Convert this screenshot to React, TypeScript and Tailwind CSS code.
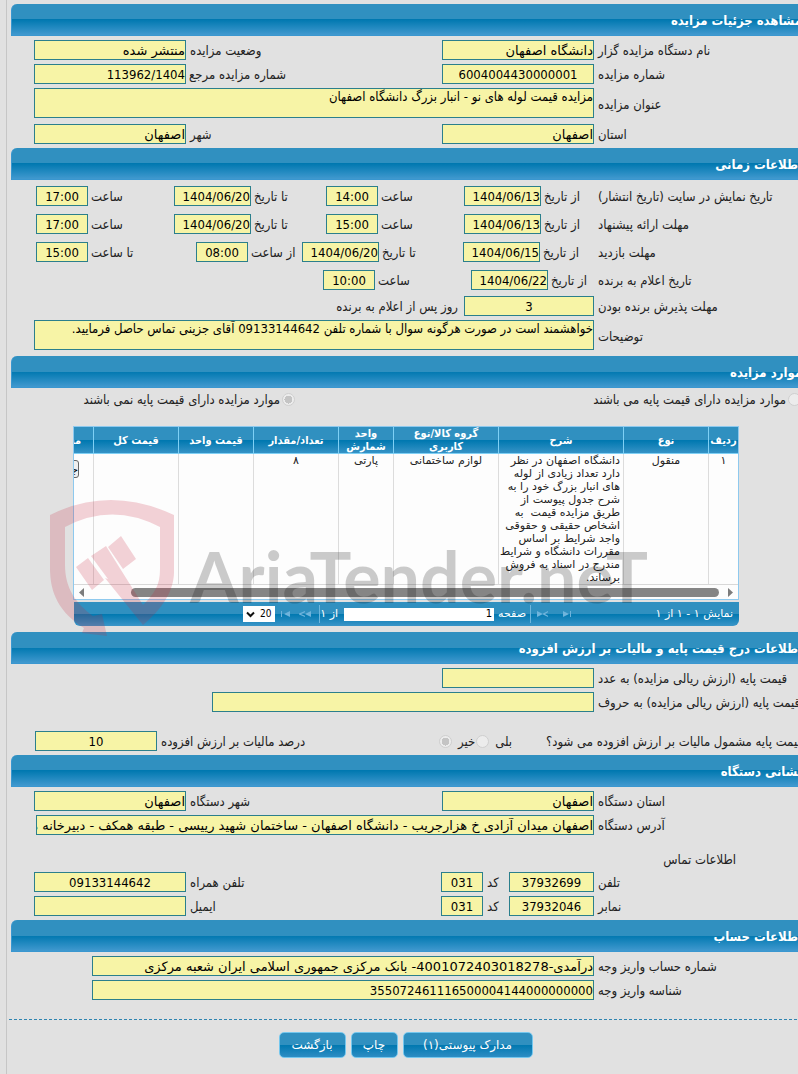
import React, { useId } from "react";
import clsx from "clsx";

const fieldClass =
  "block shrink-0 border border-[#2b7f8c] bg-[#f7f4a6] p-0 text-black outline-none";

const wideFont = "font-['DejaVu_Sans',sans-serif]";

type SectionProps = {
  title: string;
  className?: string;
  children: React.ReactNode;
};

function Section({ title, className, children }: SectionProps) {
  return (
    <section className={clsx("relative", className)}>
      <div className="flex h-8 items-center rounded-tl-md border-b border-l border-[#3a97d0] bg-[linear-gradient(#3090c0_0,#3090c0_50%,#0078b0_50%,#4199cf_100%)]">
        <h2 className="-mr-1 whitespace-nowrap pt-0.5 text-[13px] font-bold text-white">
          {title}
        </h2>
      </div>
      {children}
    </section>
  );
}

type RowProps = { className?: string; children: React.ReactNode };

function Row({ className, children }: RowProps) {
  return (
    <div className={clsx("flex items-center", className ?? "h-6 pl-[23px]")}>
      {children}
    </div>
  );
}

type FieldProps = {
  label: string;
  value?: string;
  labelWidth: string;
  width: string;
  align?: string;
  ltr?: boolean;
  wide?: boolean;
};

// label cell followed by its read only box, label text sits against the box
function Field({
  label,
  value = "",
  labelWidth,
  width,
  align,
  ltr,
  wide,
}: FieldProps) {
  const id = useId();
  return (
    <>
      <label
        htmlFor={id}
        className={clsx(
          "flex justify-end whitespace-nowrap pt-0.5",
          labelWidth,
          ltr ? "pl-[3px]" : "pl-1",
        )}
      >
        {label}
      </label>
      <input
        id={id}
        readOnly
        defaultValue={value}
        dir={ltr ? "ltr" : "rtl"}
        className={clsx(
          fieldClass,
          "h-5 text-[13px]",
          width,
          align,
          wide && wideFont,
        )}
      />
    </>
  );
}

function AreaField({ label, value }: { label: string; value: string }) {
  const id = useId();
  return (
    <Row className="h-9 pb-0.5 pl-[23px]">
      <label
        htmlFor={id}
        className="flex w-[204px] shrink-0 justify-end whitespace-nowrap pl-1 pt-1"
      >
        {label}
      </label>
      <textarea
        id={id}
        readOnly
        defaultValue={value}
        className={clsx(
          fieldClass,
          "h-[30px] min-w-0 flex-1 resize-none overflow-hidden text-[13px] leading-4",
        )}
      />
    </Row>
  );
}

type Slot = { label: string; value: string; cell: string; date?: boolean };

function DateRow({ title, slots }: { title: string; slots: Slot[] }) {
  return (
    <Row className="h-7 pl-[25px]">
      <div className="flex w-[204px] shrink-0 justify-end whitespace-nowrap pl-1 pt-0.5">
        {title}
      </div>
      {slots.map((s, i) => (
        <div key={i} className={clsx("flex items-center", s.cell)}>
          <Field
            label={s.label}
            value={s.value}
            labelWidth="flex-1"
            width={s.date ? "w-[77px]" : "w-[52px]"}
            align={s.date ? "text-right" : "text-center"}
            ltr
          />
        </div>
      ))}
    </Row>
  );
}

type RadioProps = { name: string; label: string; checked?: boolean };

function Radio({ name, label, checked }: RadioProps) {
  return (
    <label className="flex items-center whitespace-nowrap">
      <input
        type="radio"
        name={name}
        defaultChecked={checked}
        disabled
        className="size-[13px] shrink-0 appearance-none rounded-full border border-[#cfcfcf] bg-[#ececec] checked:bg-[radial-gradient(circle,#c4c4c4_0,#c4c4c4_4px,#ececec_4px)]"
      />
      <span className="pr-0.5 pt-0.5">{label}</span>
    </label>
  );
}

const columns = [
  { title: "ردیف", width: "w-[30px]" },
  { title: "نوع", width: "w-[85px]" },
  { title: "شرح", width: "w-[125px]" },
  { title: "گروه کالا/نوع\nکاربری", width: "w-[105px]" },
  { title: "واحد\nشمارش", width: "w-[55px]" },
  { title: "تعداد/مقدار", width: "w-[85px]" },
  { title: "قیمت واحد", width: "w-[75px]" },
  { title: "قیمت کل", width: "w-[85px]" },
  { title: "مستندات", width: "w-[68px]" },
];

const descriptionLines = [
  "دانشگاه اصفهان در نظر",
  "دارد تعداد زیادی از لوله",
  "های انبار بزرگ خود را به",
  "شرح جدول پیوست از",
  "طریق مزایده قیمت  به",
  "اشخاص حقیقی و حقوقی",
  "واجد شرایط بر اساس",
  "مقررات دانشگاه و شرایط",
  "مندرج در اسناد به فروش",
  "برساند.",
];

function ItemsTable() {
  const cell = "border-l border-[#dcdcdc] p-0 text-center";
  return (
    <div className="overflow-hidden border border-[#8ec9ee] bg-[#fdfdfd]">
      <table className="w-[713px] table-fixed border-separate border-spacing-0 text-[11px]">
        <thead>
          <tr className="h-[27px] bg-[linear-gradient(#3090c0_0,#3090c0_50%,#0078b0_50%,#3a95c8_100%)] text-white">
            {columns.map((c) => (
              <th
                key={c.title}
                className={clsx(
                  "whitespace-pre border-b border-l border-[#7fd0f5] p-0 text-center leading-[13px]",
                  c.width,
                )}
              >
                {c.title}
              </th>
            ))}
          </tr>
        </thead>
        <tbody>
          <tr
            className={clsx(
              "h-[130px] align-top leading-[13px] text-[#222]",
              wideFont,
            )}
          >
            <td className={cell}>۱</td>
            <td className={cell}>منقول</td>
            <td className={clsx(cell, "whitespace-pre pr-[3px] text-right")}>
              {descriptionLines.join("\n")}
            </td>
            <td className={cell}>لوازم ساختمانی</td>
            <td className={cell}>پارتی</td>
            <td className={cell}>۸</td>
            <td className={cell}></td>
            <td className={cell}></td>
            <td className="p-0 pr-3.5 pt-1.5 text-right">
              <button className="h-[18px] rounded-[3px] border border-[#666] bg-[#efefef] pl-1 text-black">
                جزئیات
              </button>
            </td>
          </tr>
        </tbody>
      </table>
      <div
        dir="ltr"
        className="flex h-[15px] items-center border-t border-[#d8d8d8] px-1"
      >
        <svg width="7" height="9" viewBox="0 0 7 9" fill="#7c7c7c">
          <path d="M6 0v9L1 4.500z" />
        </svg>
        <div className="ml-[46px] mr-2 h-[9px] flex-1 rounded-full bg-[#858585]" />
        <svg width="7" height="9" viewBox="0 0 7 9" fill="#7c7c7c">
          <path d="M1 0v9l5-4.500z" />
        </svg>
      </div>
    </div>
  );
}

function PagerIcon({ label, d }: { label: string; d: string }) {
  return (
    <button aria-label={label} className="flex items-center">
      <svg width="12" height="8" viewBox="0 0 12 8">
        <path d={d} fill="#6fb4dc" />
      </svg>
    </button>
  );
}

function Pager() {
  return (
    <div
      className={clsx(
        "ml-px mt-0.5 flex h-6 items-center rounded-b-md bg-[linear-gradient(#3090c0_0,#3090c0_50%,#0078b0_50%,#3a95c8_100%)] pr-1.5 text-[11px] text-white",
        wideFont,
      )}
    >
      <div className="w-40">نمایش ۱ - ۱ از ۱</div>
      <div className="flex gap-3">
        <PagerIcon label="صفحه اول" d="M2 1v6l6-3zM9 1h1v6h-1z" />
        <PagerIcon
          label="صفحه قبل"
          d="M0 1v6l6-3zM11 1v1.200L8 4l3 1.800V7L6 4.400v-.8z"
        />
      </div>
      <div className="mr-1.5 h-[18px] w-px bg-[#6db6dd]" />
      <label htmlFor="page" className="px-1">
        صفحه
      </label>
      <input
        id="page"
        defaultValue="1"
        className="h-[13px] w-[150px] bg-white px-0.5 text-[10px] text-black outline-none"
      />
      <span className="w-6 whitespace-nowrap pr-1.5">از ۱</span>
      <div className="h-[18px] w-px bg-[#6db6dd]" />
      <div className="mr-2 flex gap-2">
        <PagerIcon
          label="صفحه بعد"
          d="M12 1v6L6 4zM6 1v1.200L2 4l4 1.800V7L0 4.400v-.8z"
        />
        <PagerIcon label="صفحه آخر" d="M11 1v6L5 4zM2 1h1v6H2z" />
      </div>
      <div className="relative mr-1">
        <select
          aria-label="تعداد در صفحه"
          dir="ltr"
          className="block h-4 w-8 appearance-none bg-white pl-[17px] font-['DejaVu_Sans_Condensed',sans-serif] text-[10px] text-black outline-none"
        >
          <option>20</option>
        </select>
        <svg
          className="pointer-events-none absolute left-[3px] top-[5px]"
          width="9"
          height="7"
          viewBox="0 0 9 7"
          fill="none"
          stroke="#111"
          strokeWidth="2"
        >
          <path d="M1 1.500 4.500 5 8 1.500" />
        </svg>
      </div>
    </div>
  );
}

function Watermark() {
  return (
    <div
      dir="ltr"
      aria-hidden
      className="pointer-events-none absolute left-[39px] top-[143px] z-10 flex"
    >
      <svg width="124" height="138" viewBox="0 0 124 138" fill="#c8233b" fillOpacity="0.2">
        <path d="M0 16Q60-14 124 16V73C124 92 112 110 93 126L55 79 58 80 41 57 56 47 71 71 93 106C105 94 110 86 110 70V28Q62 3 15 28V66C15 88 25 104 43 117L52 115 57 137 32 134 34 129C10 114 0 95 0 69Z" />
        <path d="M58 48 71 37 86 60 73 70ZM26 68 38 59 54 81 42 91Z" />
      </svg>
      <span className="ml-4 mt-[32px] whitespace-nowrap font-['Lato',sans-serif] text-[70px] font-bold leading-[90px] text-black/20">
        AriaTender.neT
      </span>
    </div>
  );
}

const buttonClass =
  "h-[26px] rounded-[5px] border border-[#74c7ee] bg-[linear-gradient(#3090c0_0,#3090c0_50%,#0078b0_50%,#2d8dc4_100%)] font-['DejaVu_Sans',sans-serif] text-[12px] text-white";

const firstLabel = "w-[204px] shrink-0";
const twoColumn = { labelWidth: firstLabel, width: "w-[152px]" };
const secondColumn = { labelWidth: "flex-1", width: "w-[152px]" };

export default function App() {
  return (
    <div
      dir="rtl"
      className="overflow-hidden bg-[#e1e1e1] pl-1.5 font-['DejaVu_Sans_Condensed','DejaVu_Sans',sans-serif] text-[13px] leading-4 text-[#222]"
    >
      <main className="border-l border-[#c6c6c6] pb-[18px] pt-1">
        <div className="pl-1">
          <Section title="مشاهده جزئیات مزایده">
            <div className="py-0.5">
              <Row>
                <Field label="نام دستگاه مزایده گزار" value="دانشگاه اصفهان" wide {...twoColumn} />
                <Field label="وضعیت مزایده" value="منتشر شده" wide {...secondColumn} />
              </Row>
              <Row>
                <Field label="شماره مزایده" value="6004004430000001" align="text-center" {...twoColumn} />
                <Field label="شماره مزایده مرجع" value="113962/1404" ltr align="text-right" {...secondColumn} />
              </Row>
              <AreaField
                label="عنوان مزایده"
                value="مزایده قیمت لوله های نو - انبار بزرگ دانشگاه اصفهان"
              />
              <Row>
                <Field label="استان" value="اصفهان" wide {...twoColumn} />
                <Field label="شهر" value="اصفهان" wide {...secondColumn} />
              </Row>
            </div>
          </Section>

          <Section title="اطلاعات زمانی">
            <div className="py-0.5">
              <DateRow
                title="تاریخ نمایش در سایت (تاریخ انتشار)"
                slots={[
                  { label: "از تاریخ", value: "1404/06/13", date: true, cell: "w-[130px]" },
                  { label: "ساعت", value: "14:00", cell: "w-[138px]" },
                  { label: "تا تاریخ", value: "1404/06/20", date: true, cell: "w-[152px]" },
                  { label: "ساعت", value: "17:00", cell: "flex-1" },
                ]}
              />
              <DateRow
                title="مهلت ارائه پیشنهاد"
                slots={[
                  { label: "از تاریخ", value: "1404/06/13", date: true, cell: "w-[130px]" },
                  { label: "ساعت", value: "15:00", cell: "w-[138px]" },
                  { label: "تا تاریخ", value: "1404/06/20", date: true, cell: "w-[152px]" },
                  { label: "ساعت", value: "17:00", cell: "flex-1" },
                ]}
              />
              <DateRow
                title="مهلت بازدید"
                slots={[
                  { label: "از تاریخ", value: "1404/06/15", date: true, cell: "w-[131px]" },
                  { label: "تا تاریخ", value: "1404/06/20", date: true, cell: "w-[161px]" },
                  { label: "از ساعت", value: "08:00", cell: "w-[106px]" },
                  { label: "تا ساعت", value: "15:00", cell: "flex-1" },
                ]}
              />
              <DateRow
                title="تاریخ اعلام به برنده"
                slots={[
                  { label: "از تاریخ", value: "1404/06/22", date: true, cell: "w-[123px]" },
                  { label: "ساعت", value: "10:00", cell: "w-[148px]" },
                ]}
              />
              <Row>
                <Field
                  label="مهلت پذیرش برنده بودن"
                  value="3"
                  labelWidth={firstLabel}
                  width="w-[130px]"
                  align="text-center"
                />
                <span className="pr-1.5 pt-0.5">روز پس از اعلام به برنده</span>
              </Row>
              <AreaField
                label="توضیحات"
                value="خواهشمند است در صورت هرگونه سوال با شماره تلفن 09133144642 آقای جزینی تماس حاصل فرمایید."
              />
            </div>
          </Section>

          <Section title="موارد مزایده">
            <div className="flex h-[22px] items-center">
              <div className="-mr-[3px] w-[506px]">
                <Radio name="basePrice" label="موارد مزایده دارای قیمت پایه می باشند" />
              </div>
              <Radio name="basePrice" label="موارد مزایده دارای قیمت پایه نمی باشند" checked />
            </div>
            <div className="mb-1.5 ml-[62px] mr-[59px] mt-4">
              <ItemsTable />
              <Pager />
            </div>
            <Watermark />
          </Section>

          <Section title="اطلاعات درج قیمت پایه و مالیات بر ارزش افزوده">
            <div className="py-0.5">
              <Row>
                <Field label="قیمت پایه (ارزش ریالی مزایده) به عدد" {...twoColumn} />
              </Row>
              <Row>
                <Field
                  label="قیمت پایه (ارزش ریالی مزایده) به حروف"
                  labelWidth={firstLabel}
                  width="w-[382px]"
                />
              </Row>
              <Row className="mt-[15px] h-6 pl-6">
                <div className="flex w-[252px] shrink-0 justify-end whitespace-nowrap pt-0.5">
                  قیمت پایه مشمول مالیات بر ارزش افزوده می شود؟
                </div>
                <div className="flex w-[107px] shrink-0 items-center justify-end">
                  <label htmlFor="vat-yes" className="pl-1.5 pt-0.5">
                    بلی
                  </label>
                  <input
                    id="vat-yes"
                    type="radio"
                    name="vat"
                    disabled
                    className="size-[13px] appearance-none rounded-full border border-[#cfcfcf] bg-[#ececec]"
                  />
                  <label htmlFor="vat-no" className="pl-1.5 pr-px pt-0.5">
                    خیر
                  </label>
                  <input
                    id="vat-no"
                    type="radio"
                    name="vat"
                    defaultChecked
                    disabled
                    className="size-[13px] appearance-none rounded-full border border-[#cfcfcf] bg-[radial-gradient(circle,#c4c4c4_0,#c4c4c4_4px,#ececec_4px)]"
                  />
                </div>
                <Field
                  label="درصد مالیات بر ارزش افزوده"
                  value="10"
                  labelWidth="flex-1"
                  width="w-[122px]"
                  align="text-center"
                />
              </Row>
            </div>
          </Section>

          <Section title="نشانی دستگاه">
            <div className="py-0.5">
              <Row>
                <Field label="استان دستگاه" value="اصفهان" wide {...twoColumn} />
                <Field label="شهر دستگاه" value="اصفهان" wide {...secondColumn} />
              </Row>
              <Row>
                <Field
                  label="آدرس دستگاه"
                  value="اصفهان میدان آزادی خ هزارجریب - دانشگاه اصفهان - ساختمان شهید رییسی - طبقه همکف - دبیرخانه مرکزی"
                  labelWidth={firstLabel}
                  width="w-[558px]"
                  wide
                />
              </Row>
              <h3 className="mr-[62px] mt-[15px] h-[18px]">اطلاعات تماس</h3>
              <Row>
                <Field
                  label="تلفن"
                  value="37932699"
                  labelWidth={firstLabel}
                  width="w-[85px]"
                  align="text-center"
                />
                <Field label="کد" value="031" labelWidth="w-[26px]" width="w-[42px]" align="text-center" />
                <Field label="تلفن همراه" value="09133144642" align="text-center" {...secondColumn} />
              </Row>
              <Row>
                <Field
                  label="نمابر"
                  value="37932046"
                  labelWidth={firstLabel}
                  width="w-[85px]"
                  align="text-center"
                />
                <Field label="کد" value="031" labelWidth="w-[26px]" width="w-[42px]" align="text-center" />
                <Field label="ایمیل" {...secondColumn} />
              </Row>
            </div>
          </Section>

          <Section title="اطلاعات حساب">
            <div className="py-0.5">
              <Row>
                <Field
                  label="شماره حساب واریز وجه"
                  value="درآمدی-4001072403018278- بانک مرکزی جمهوری اسلامی ایران شعبه مرکزی"
                  labelWidth={firstLabel}
                  width="w-[502px]"
                  wide
                />
              </Row>
              <Row>
                <Field
                  label="شناسه واریز وجه"
                  value="355072461116500004144000000000"
                  labelWidth={firstLabel}
                  width="w-[502px]"
                />
              </Row>
            </div>
          </Section>
        </div>

        <div className="ml-0.5 mt-[15px] h-px bg-[repeating-linear-gradient(90deg,#2f84b0_0,#2f84b0_3px,transparent_3px,transparent_5px)]" />
        <div className="mt-3 flex justify-center gap-[5px] pl-1.5">
          <button className={clsx(buttonClass, "w-[130px]")}>مدارک پیوستی(۱)</button>
          <button className={clsx(buttonClass, "w-[47px]")}>چاپ</button>
          <button className={clsx(buttonClass, "w-[67px]")}>بازگشت</button>
        </div>
      </main>
    </div>
  );
}
